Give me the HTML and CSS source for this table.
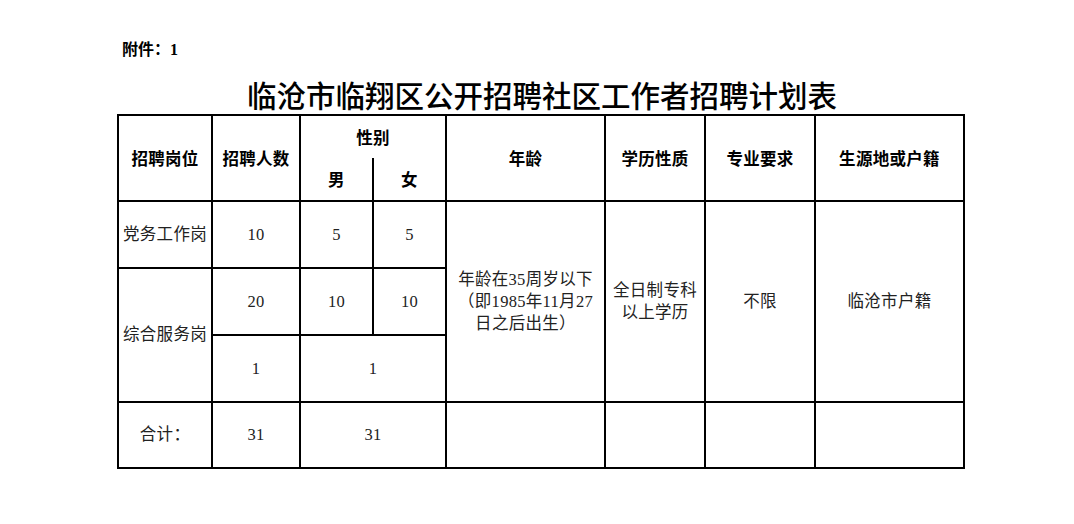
FILE: index.html
```html
<!DOCTYPE html>
<html lang="zh-CN">
<head>
<meta charset="utf-8">
<title>临沧市临翔区公开招聘社区工作者招聘计划表</title>
<link rel="stylesheet" href="styles.css">
</head>
<body>
<div class="page">
  <div class="attach">附件：1</div>
  <h1 class="title">临沧市临翔区公开招聘社区工作者招聘计划表</h1>
  <table class="plan">
    <colgroup>
      <col class="c1"><col class="c2"><col class="c3"><col class="c4"><col class="c5"><col class="c6"><col class="c7"><col class="c8">
    </colgroup>
    <tr class="h1">
      <th rowspan="2">招聘岗位</th>
      <th rowspan="2">招聘人数</th>
      <th colspan="2" class="gender">性别</th>
      <th rowspan="2">年龄</th>
      <th rowspan="2">学历性质</th>
      <th rowspan="2">专业要求</th>
      <th rowspan="2">生源地或户籍</th>
    </tr>
    <tr class="h2">
      <th class="sub">男</th>
      <th class="sub">女</th>
    </tr>
    <tr class="r">
      <td>党务工作岗</td>
      <td>10</td>
      <td>5</td>
      <td>5</td>
      <td rowspan="3" class="multi">年龄在35周岁以下<br>（即1985年11月27<br>日之后出生）</td>
      <td rowspan="3" class="multi">全日制专科<br>以上学历</td>
      <td rowspan="3">不限</td>
      <td rowspan="3">临沧市户籍</td>
    </tr>
    <tr class="r">
      <td rowspan="2">综合服务岗</td>
      <td>20</td>
      <td>10</td>
      <td>10</td>
    </tr>
    <tr class="r">
      <td>1</td>
      <td colspan="2">1</td>
    </tr>
    <tr class="r last">
      <td>合计：</td>
      <td>31</td>
      <td colspan="2">31</td>
      <td></td>
      <td></td>
      <td></td>
      <td></td>
    </tr>
  </table>
</div>
</body>
</html>
```
FILE: styles.css
```css
html, body {
  margin: 0;
  padding: 0;
  background: #fff;
}
.page {
  width: 846px;
  padding-left: 117px;
  font-family: "Liberation Serif", "Noto Sans CJK SC", serif;
  color: #222;
}
.attach {
  padding-top: 40px;
  padding-left: 5px;
  height: 20px;
  line-height: 20px;
  font-family: "Liberation Serif", "Noto Sans CJK SC", sans-serif;
  font-weight: 700;
  font-size: 16px;
  color: #000;
}
.title {
  margin: 15px 0 0 0;
  height: 39px;
  line-height: 39px;
  text-align: center;
  font-family: "Noto Sans CJK SC", sans-serif;
  font-weight: 500;
  font-size: 29.5px;
  color: #000;
  padding-left: 4px;
}
.plan {
  width: 846px;
  table-layout: fixed;
  border-collapse: collapse;
}
.c1 { width: 94px; }
.c2 { width: 88px; }
.c3 { width: 73px; }
.c4 { width: 73px; }
.c5 { width: 159px; }
.c6 { width: 100px; }
.c7 { width: 110px; }
.c8 { width: 149px; }
.plan th, .plan td {
  border: 2px solid #000;
  padding: 0;
  text-align: center;
  vertical-align: middle;
}
.plan th {
  font-family: "Noto Sans CJK SC", sans-serif;
  font-weight: 700;
  font-size: 16.5px;
  letter-spacing: 0.3px;
  color: #000;
}
.plan td {
  font-size: 16.5px;
  line-height: 22px;
  letter-spacing: 0.3px;
}
.h1 { height: 43px; }
.h2 { height: 43px; }
.plan th.gender { border-bottom: hidden; }
.plan th.sub { border-top: hidden; }
.r { height: 67px; }
.r.last { height: 66px; }
```
